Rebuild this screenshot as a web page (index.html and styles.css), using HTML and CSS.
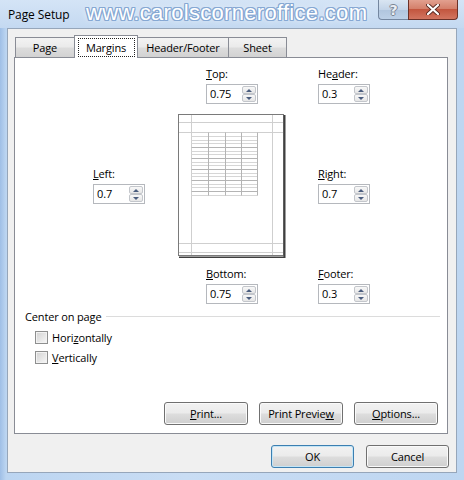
FILE: index.html
```html
<!DOCTYPE html>
<html>
<head>
<meta charset="utf-8">
<link rel="stylesheet" href="styles.css">
</head>
<body>
<div class="window">
  <div class="titlebar">
    <div class="title">Page Setup</div>
    <div class="watermark">www.carolscorneroffice.com</div>
    <div class="caption">
      <div class="cbtn help">?</div>
      <div class="cbtn close">
        <svg width="14" height="11" viewBox="0 0 14 11"><path d="M2 1 L12 10 M12 1 L2 10" stroke="#5a2a22" stroke-width="4" stroke-linecap="round"/><path d="M2 1 L12 10 M12 1 L2 10" stroke="#ffffff" stroke-width="2.2" stroke-linecap="round"/></svg>
      </div>
    </div>
  </div>
  <div class="client">
    <div class="tabarea">
      <div class="tabs">
        <div class="tab t-page">Page</div>
        <div class="tab sel t-margins"><span class="focus">Margins</span></div>
        <div class="tab t-hf">Header/Footer</div>
        <div class="tab t-sheet">Sheet</div>
      </div>
      <div class="panel">
        <div class="mgrid">
          <div class="field f-top"><div class="flabel"><u>T</u>op:</div><div class="spin"><span class="val">0.75</span><span class="btns"><span class="sb up"></span><span class="sb down"></span></span></div></div>
          <div class="field f-header"><div class="flabel">He<u>a</u>der:</div><div class="spin"><span class="val">0.3</span><span class="btns"><span class="sb up"></span><span class="sb down"></span></span></div></div>
          <div class="field f-left"><div class="flabel"><u>L</u>eft:</div><div class="spin"><span class="val">0.7</span><span class="btns"><span class="sb up"></span><span class="sb down"></span></span></div></div>
          <div class="preview">
            <svg width="108" height="144" viewBox="0 0 108 144">
              <rect x="0.5" y="0.5" width="105" height="141" fill="#ffffff" stroke="#7a7a7a"/>
              <path d="M106.5 1 V143.5 H1" fill="none" stroke="#3f3f3f" stroke-width="2"/>
              <g stroke="#cfcfcf" stroke-width="1">
                <path d="M13.5 1 V141 M94.5 1 V141 M1 8.5 H105 M1 18.5 H105 M1 129.5 H105 M1 138.5 H105"/>
              </g>
              <g stroke="#d6d6d6" stroke-width="1">
                <path d="M13.5 22.5 H79.5 M13.5 26.5 H79.5 M13.5 29.5 H79.5 M13.5 33.5 H79.5 M13.5 37.5 H79.5 M13.5 40.5 H79.5 M13.5 44.5 H79.5 M13.5 48.5 H79.5 M13.5 51.5 H79.5 M13.5 55.5 H79.5 M13.5 59.5 H79.5 M13.5 62.5 H79.5 M13.5 66.5 H79.5 M13.5 70.5 H79.5 M13.5 73.5 H79.5 M13.5 77.5 H79.5 M13.5 81.5 H79.5"/>
              </g>
              <g stroke="#b4b4b4" stroke-width="1">
                <path d="M13.5 33.5 H79.5 M13.5 44.5 H79.5 M13.5 55.5 H79.5 M13.5 66.5 H79.5 M13.5 77.5 H79.5"/>
                <path d="M30.5 18.5 V81.5 M47.5 18.5 V81.5 M63.5 18.5 V81.5 M79.5 18.5 V81.5"/>
              </g>
            </svg>
          </div>
          <div class="field f-right"><div class="flabel"><u>R</u>ight:</div><div class="spin"><span class="val">0.7</span><span class="btns"><span class="sb up"></span><span class="sb down"></span></span></div></div>
          <div class="field f-bottom"><div class="flabel"><u>B</u>ottom:</div><div class="spin"><span class="val">0.75</span><span class="btns"><span class="sb up"></span><span class="sb down"></span></span></div></div>
          <div class="field f-footer"><div class="flabel"><u>F</u>ooter:</div><div class="spin"><span class="val">0.3</span><span class="btns"><span class="sb up"></span><span class="sb down"></span></span></div></div>
        </div>
        <div class="group"><span>Center on page</span><div class="gline"></div></div>
        <div class="check first"><span class="box"></span><span>Hori<u>z</u>ontally</span></div>
        <div class="check"><span class="box"></span><span><u>V</u>ertically</span></div>
        <div class="pbuttons">
          <div class="btn"><span><u>P</u>rint...</span></div>
          <div class="btn"><span>Print Previe<u>w</u></span></div>
          <div class="btn"><span><u>O</u>ptions...</span></div>
        </div>
      </div>
    </div>
    <div class="dbuttons">
      <div class="btn dbtn def">OK</div>
      <div class="btn dbtn">Cancel</div>
    </div>
  </div>
</div>
</body>
</html>
```
FILE: styles.css
```css
* { box-sizing: border-box; }
html, body { margin: 0; padding: 0; }
body {
  width: 464px;
  height: 480px;
  overflow: hidden;
  font-family: "Open Sans", "Noto Sans", sans-serif;
  font-size: 11px;
  letter-spacing: -0.15px;
  color: #000;
}
.window {
  width: 464px;
  height: 480px;
  display: flex;
  flex-direction: column;
  background: linear-gradient(90deg, #9fbfe6 0px, #bcd5f1 6px, #c9ddf4 40%, #bed6f1 100%);
}
.titlebar {
  position: relative;
  height: 28px;
  display: flex;
  align-items: flex-start;
  background: linear-gradient(180deg, #d4e4f6 0%, #c4d9f1 100%);
}
.title {
  padding: 5px 0 0 8px;
  line-height: 20px;
  font-size: 12px;
  letter-spacing: -0.1px;
}
.watermark {
  position: absolute;
  left: 86px;
  top: 0;
  font-family: "Liberation Sans", Arial, sans-serif;
  font-size: 22px;
  line-height: 26px;
  color: #ffffff;
  letter-spacing: 0.3px;
  text-shadow:
    1px 0 0 #86a8d3, -1px 0 0 #86a8d3, 0 1px 0 #86a8d3, 0 -1px 0 #86a8d3,
    1px 1px 0 #86a8d3, -1px -1px 0 #86a8d3, 1px -1px 0 #86a8d3, -1px 1px 0 #86a8d3,
    0 0 6px rgba(255,255,255,0.9);
}
.caption {
  margin-left: auto;
  margin-right: 6px;
  display: flex;
}
.cbtn {
  height: 20px;
  display: flex;
  align-items: center;
  justify-content: center;
}
.help {
  width: 30px;
  border: 1px solid #7487a0;
  border-top: none;
  border-right: none;
  border-radius: 0 0 0 4px;
  background: linear-gradient(180deg, #d9e5f2 0%, #c3d4e8 50%, #b0c5de 51%, #bcd0e7 100%);
  color: #e9eef4;
  font-family: "DejaVu Sans", sans-serif;
  font-weight: bold;
  font-size: 14px;
  text-shadow: 1px 0 0 #7b8593, -1px 0 0 #7b8593, 0 1px 0 #7b8593, 0 -1px 0 #7b8593;
}
.close {
  width: 50px;
  border: 1px solid #6b3128;
  border-top: none;
  border-radius: 0 0 4px 0;
  background: linear-gradient(180deg, #e2a08f 0%, #d4806b 45%, #c3563f 50%, #d27560 100%);
}
.client {
  margin: 0 7px;
  height: 445px;
  border: 1px solid #96a6ba;
  background: #f0f0f0;
  display: flex;
  flex-direction: column;
}
.tabarea {
  margin: 6px 8px 0 6px;
  display: flex;
  flex-direction: column;
}
.tabs {
  display: flex;
  align-items: flex-end;
  height: 22px;
  padding-left: 1px;
}
.tab {
  height: 20px;
  border: 1px solid #898c95;
  border-bottom: none;
  margin-right: -1px;
  display: flex;
  align-items: center;
  justify-content: center;
  background: linear-gradient(180deg, #f3f3f3 0%, #ebebeb 45%, #dcdcdc 55%, #d2d2d2 100%);
  padding-bottom: 1px;
}
.t-page { width: 60px; }
.t-margins { width: 64px; }
.t-hf { width: 92px; }
.t-sheet { width: 59px; }
.tab.sel {
  position: relative;
  z-index: 1;
  height: 23px;
  margin-bottom: -1px;
  background: #ffffff;
  padding-bottom: 0;
}
.focus {
  display: block;
  width: 57px;
  height: 19px;
  margin-top: 1px;
  border: 1px dotted #222;
  text-align: center;
  line-height: 17px;
}
.panel {
  height: 377px;
  border: 1px solid #898c95;
  background: #ffffff;
  display: flex;
  flex-direction: column;
  padding: 8px 9px 8px 10px;
}
.mgrid {
  margin-left: 68px;
  display: grid;
  grid-template-columns: 85px 108px 32px 52px;
  grid-template-rows: 38px 144px 38px;
  row-gap: 9px;
}
.field { display: flex; flex-direction: column; }
.flabel { line-height: 15px; margin-bottom: 3px; white-space: nowrap; }
.f-top { grid-column: 2; grid-row: 1; margin-left: 28px; }
.f-header { grid-column: 4; grid-row: 1; }
.f-left { grid-column: 1; grid-row: 2; align-self: center; }
.preview { grid-column: 2; grid-row: 2; margin-top: 1px; }
.preview svg { display: block; }
.f-right { grid-column: 4; grid-row: 2; align-self: center; }
.f-bottom { grid-column: 2; grid-row: 3; margin-left: 28px; }
.f-footer { grid-column: 4; grid-row: 3; }
.spin {
  width: 52px;
  height: 20px;
  border: 1px solid #b5b8bd;
  background: #fff;
  display: flex;
}
.val {
  flex: 1;
  padding-left: 3px;
  line-height: 18px;
}
.btns {
  width: 15px;
  display: flex;
  flex-direction: column;
  padding: 1px 1px 1px 0;
}
.sb {
  flex: 1;
  border: 1px solid #c3c6cb;
  border-radius: 2px;
  background: linear-gradient(180deg, #f8f8f8 0%, #e6e6e6 100%);
  display: flex;
  align-items: center;
  justify-content: center;
}
.sb.up::after {
  content: "";
  border-left: 3px solid transparent;
  border-right: 3px solid transparent;
  border-bottom: 3px solid #4a5d7e;
}
.sb.down::after {
  content: "";
  border-left: 3px solid transparent;
  border-right: 3px solid transparent;
  border-top: 3px solid #4a5d7e;
}
.group {
  margin-top: 5px;
  display: flex;
  align-items: center;
  line-height: 15px;
  margin-right: -2px;
}
.gline {
  flex: 1;
  height: 1px;
  background: #dcdcdc;
  margin-left: 5px;
}
.check {
  height: 20px;
  display: flex;
  align-items: center;
  padding-left: 10px;
}
.check.first { margin-top: 3px; }
.box {
  width: 13px;
  height: 13px;
  border: 1px solid #8e8f8f;
  background: linear-gradient(135deg, #d2d2d2 0%, #f7f7f7 100%);
  box-shadow: inset 0 0 0 1px #f2f2f2;
  margin-right: 4px;
}
.pbuttons {
  margin-top: auto;
  display: flex;
  justify-content: flex-end;
  gap: 11px;
}
.btn {
  width: 84px;
  height: 23px;
  border: 1px solid #707070;
  border-radius: 3px;
  background: linear-gradient(180deg, #f2f2f2 0%, #ebebeb 48%, #dddddd 52%, #cfcfcf 100%);
  box-shadow: inset 0 0 0 1px #fafafa;
  display: flex;
  align-items: center;
  justify-content: center;
  white-space: nowrap;
}
.dbuttons {
  margin-top: 11px;
  display: flex;
  justify-content: flex-end;
  gap: 12px;
  padding-right: 7px;
}
.dbtn { width: 83px; }
.def {
  border-color: #3c7fb1;
  box-shadow: inset 0 0 0 1px #c4e5f6;
}
```
